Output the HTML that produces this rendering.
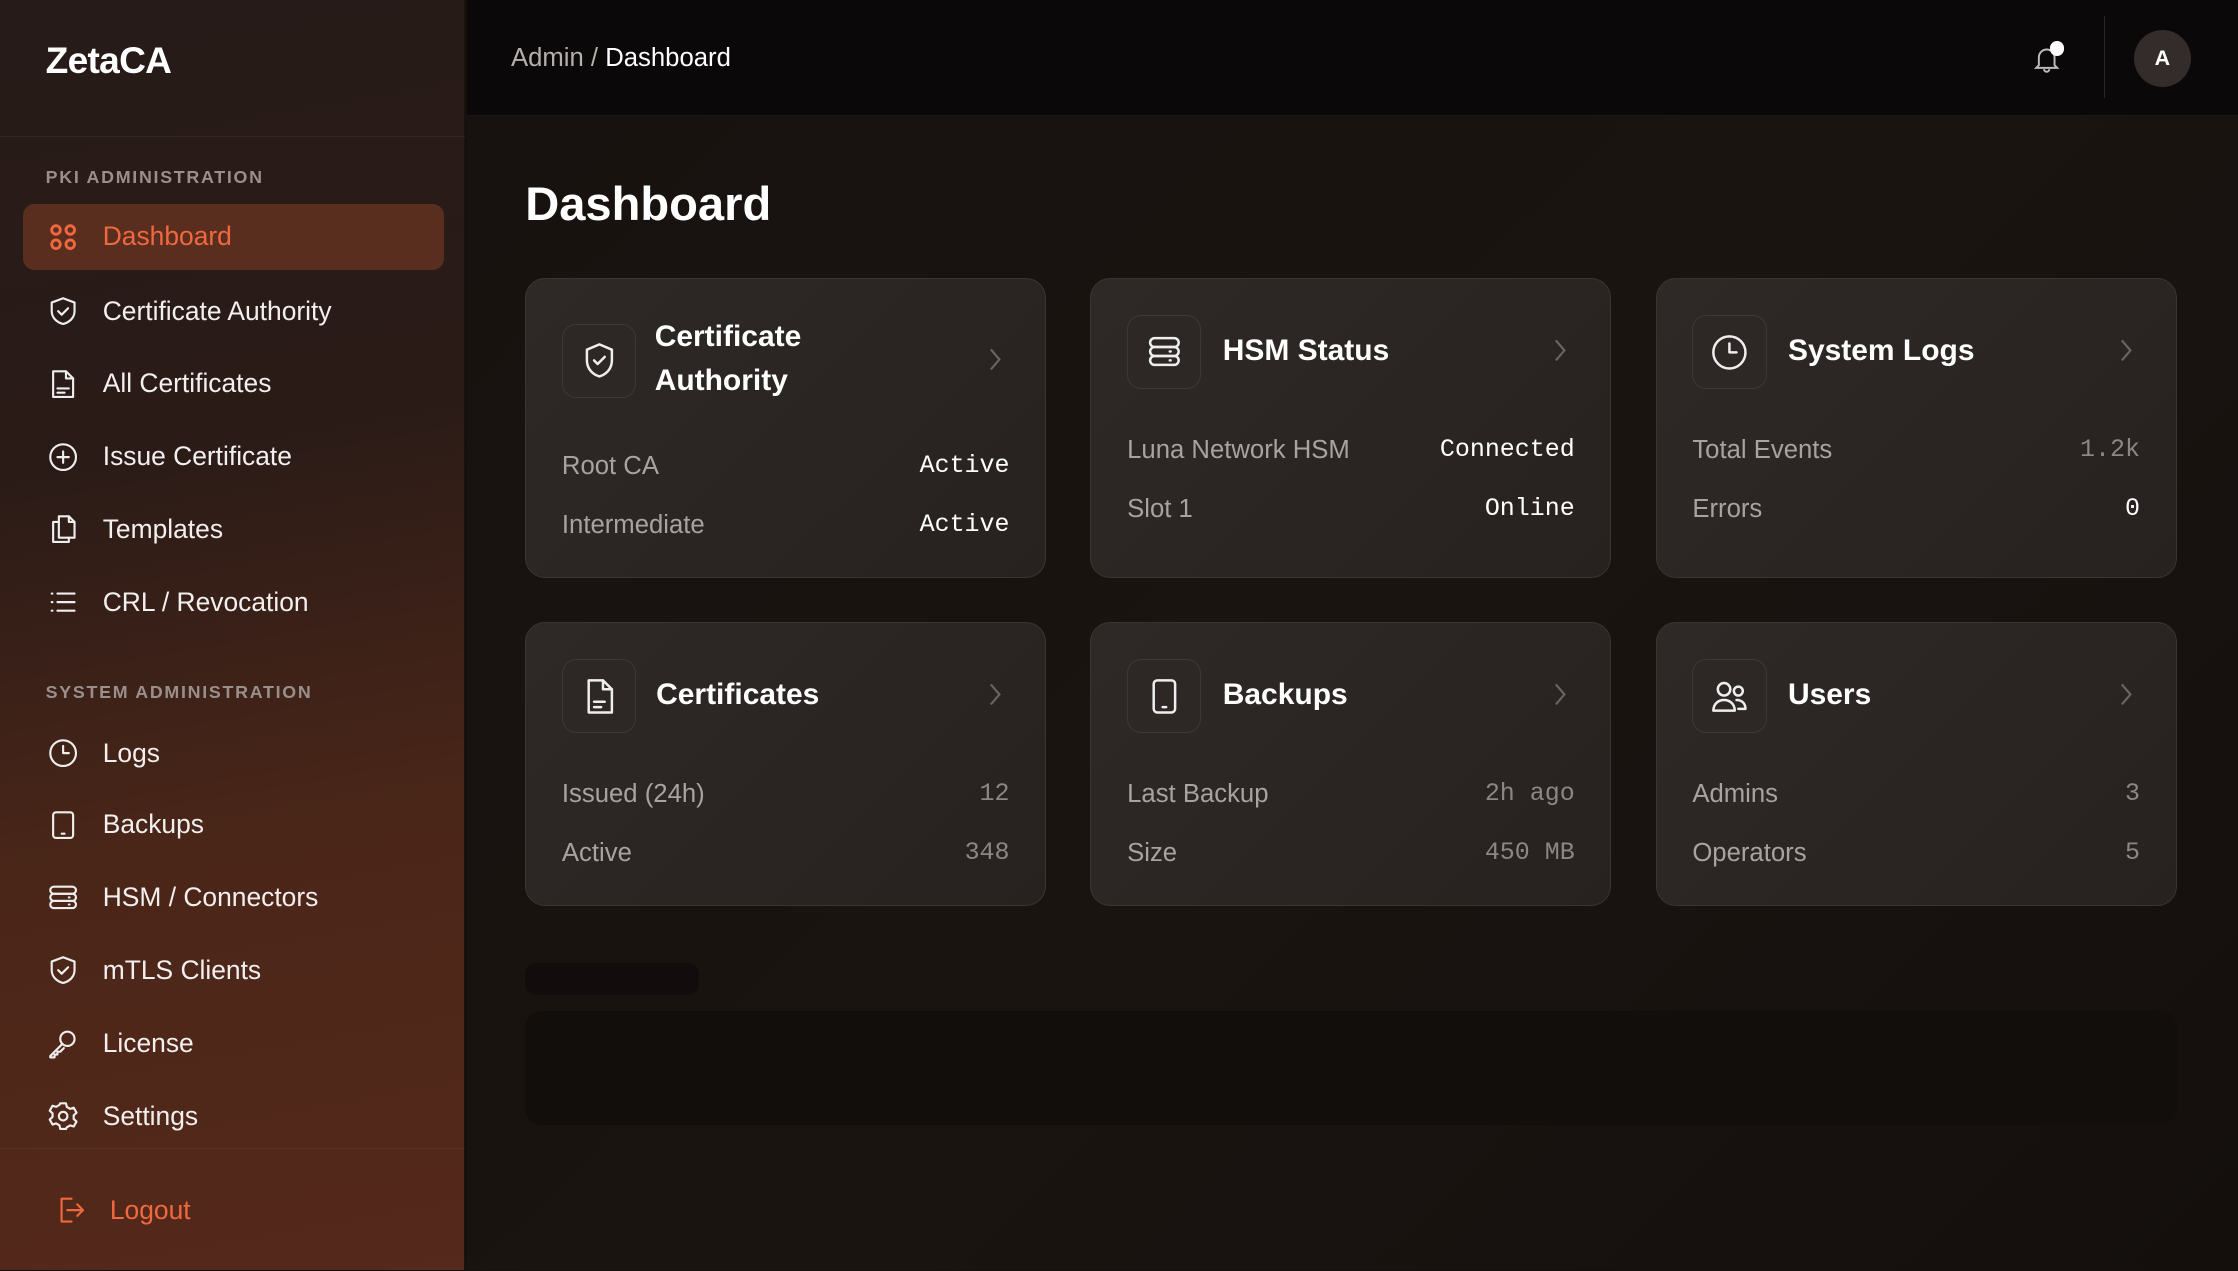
<!DOCTYPE html>
<html><head><meta charset="utf-8"><style>
*{box-sizing:border-box;margin:0;padding:0}
html,body{width:2238px;height:1271px;overflow:hidden;background:#15100e}
#w{zoom:1.42730;width:1568px;height:890px;position:relative;font-family:"Liberation Sans",sans-serif;color:#fff}
.side{position:absolute;left:0;top:0;width:326px;height:890px;background:linear-gradient(170deg,#261b18 0%,#2a1b17 35%,#4a2618 65%,#55291b 100%);border-right:1px solid #1a1210}
.logo{position:absolute;left:32px;top:27px;font-size:26px;font-weight:bold;letter-spacing:-0.5px}
.sep{position:absolute;left:0;width:326px;height:1px;background:rgba(255,255,255,0.06)}
.sec{position:absolute;left:32px;font-size:12.5px;font-weight:bold;letter-spacing:1.2px;color:#9a8f8c}
.item{position:absolute;left:16px;width:295px;height:46px;display:flex;align-items:center;padding-left:16px;font-size:18.5px;color:#f2efee}
.item svg{width:24px;height:24px;margin-right:16px;fill:none;stroke:#eee;stroke-width:1.5;stroke-linecap:round;stroke-linejoin:round}
.item.act{background:#5a2e1f;border-radius:8px;color:#f0683f}
.item.act svg{stroke:#f0683f;stroke-width:2}
.hdr{position:absolute;left:327px;top:0;right:0;height:81px;background:#0a0808;border-bottom:1px solid #1c1716}
.crumb{position:absolute;left:31px;top:31px;font-size:18px;color:#b5b0ae}
.crumb b{font-weight:normal;color:#fff}
.main{position:absolute;left:327px;top:81px;right:0;bottom:0;background:linear-gradient(135deg,#17110f,#1a1411 50%,#140f0d)}
h1{position:absolute;left:368px;top:123px;font-size:33px;font-weight:bold}
.card{position:absolute;width:365px;background:linear-gradient(135deg,#2e2826,#272220);border:1px solid #3a3432;border-radius:14px}
.ib{position:absolute;left:25px;width:52px;height:52px;border:1px solid #3e3835;background:#2d2725;border-radius:10px;display:flex;align-items:center;justify-content:center}
.ib svg{width:30px;height:30px;fill:none;stroke:#eee;stroke-width:1.4;stroke-linecap:round;stroke-linejoin:round}
.ct{position:absolute;left:90px;font-size:21px;font-weight:bold;line-height:31px}
.chev{position:absolute;right:30px;width:10px;height:16px}
.row{position:absolute;left:25px;right:25px;display:flex;justify-content:space-between;font-size:18px;color:#a8a2a0}
.row span:last-child{font-family:"Liberation Mono",monospace;font-size:17.5px}
.w{color:#fff}.g{color:#8c8684}
</style></head><body><div id="w">
<div class="side">
<div class="logo">ZetaCA</div>
<div class="sep" style="top:95px"></div>
<div class="sec" style="top:117px">PKI ADMINISTRATION</div>
<div class="item act" style="top:143px"><svg viewBox="0 0 24 24"><rect x="4" y="4" width="6" height="6" rx="3"/><rect x="14" y="4" width="6" height="6" rx="3"/><rect x="4" y="14" width="6" height="6" rx="3"/><rect x="14" y="14" width="6" height="6" rx="3"/></svg>Dashboard</div>
<div class="item" style="top:195px"><svg viewBox="0 0 24 24"><path d="M12 3l8 3v6c0 5-4 8-8 9-4-1-8-4-8-9V6z"/><path d="M8.5 12l2.5 2.5 4.5-4.5"/></svg>Certificate Authority</div>
<div class="item" style="top:246px"><svg viewBox="0 0 24 24"><path d="M5 3h9l5 5v13H5z"/><path d="M14 3v5h5M8 15h8M8 18h5"/></svg>All Certificates</div>
<div class="item" style="top:297px"><svg viewBox="0 0 24 24"><circle cx="12" cy="12" r="9"/><path d="M12 8v8M8 12h8"/></svg>Issue Certificate</div>
<div class="item" style="top:348px"><svg viewBox="0 0 24 24"><path d="M9 3h7l4 4v11H9z"/><path d="M16 3v4h4M9 7H5v14h11v-3"/></svg>Templates</div>
<div class="item" style="top:399px"><svg viewBox="0 0 24 24"><path d="M8 6h12M8 12h12M8 18h12M4 6h.5M4 12h.5M4 18h.5"/></svg>CRL / Revocation</div>
<div class="sec" style="top:478px">SYSTEM ADMINISTRATION</div>
<div class="item" style="top:505px"><svg viewBox="0 0 24 24"><circle cx="12" cy="12" r="9"/><path d="M12 7v5h4"/></svg>Logs</div>
<div class="item" style="top:555px"><svg viewBox="0 0 24 24"><rect x="5" y="3" width="14" height="18" rx="2"/><path d="M11 18h2"/></svg>Backups</div>
<div class="item" style="top:606px"><svg viewBox="0 0 24 24"><rect x="3" y="4" width="18" height="5" rx="2.5"/><rect x="3" y="9" width="18" height="5" rx="2.5"/><rect x="3" y="14" width="18" height="5" rx="2.5"/><path d="M16 11.5h.5M16 16.5h.5"/></svg>HSM / Connectors</div>
<div class="item" style="top:657px"><svg viewBox="0 0 24 24"><path d="M12 3l8 3v6c0 5-4 8-8 9-4-1-8-4-8-9V6z"/><path d="M8.5 12l2.5 2.5 4.5-4.5"/></svg>mTLS Clients</div>
<div class="item" style="top:708px"><svg viewBox="0 0 24 24"><circle cx="15" cy="9" r="5"/><path d="M11.5 12.5L3 21v1h3v-2h2v-2h2l2.5-2.5"/></svg>License</div>
<div class="item" style="top:759px"><svg viewBox="0 0 24 24"><circle cx="12" cy="12" r="3"/><path d="M10 3h4l.6 2.6 2.3 1.3 2.5-.8 2 3.5-2 1.8v2.6l2 1.8-2 3.5-2.5-.8-2.3 1.3L14 21h-4l-.6-2.6-2.3-1.3-2.5.8-2-3.5 2-1.8v-2.6l-2-1.8 2-3.5 2.5.8 2.3-1.3z"/></svg>Settings</div>
<div class="sep" style="top:804px"></div>
<div class="item" style="top:825px;left:21px;color:#f0683f"><svg viewBox="0 0 24 24" style="stroke:#f0683f"><path d="M13 4H6v16h7M10 12h11M17 8l4 4-4 4"/></svg>Logout</div>
</div>
<div class="hdr"><div class="crumb">Admin / <b>Dashboard</b></div>
<svg style="position:absolute;left:1096px;top:30px;width:22px;height:22px" viewBox="0 0 24 24" fill="none" stroke="#bbb" stroke-width="1.5"><path d="M6 17V11a6 6 0 0112 0v6l2 2H4z"/><path d="M10 20a2 2 0 004 0"/></svg>
<div style="position:absolute;left:1109px;top:29px;width:10px;height:10px;border-radius:50%;background:#fff"></div>
<div style="position:absolute;left:1147px;top:11px;width:1px;height:58px;background:#2a2422"></div>
<div style="position:absolute;left:1168px;top:21px;width:40px;height:40px;border-radius:50%;background:#332c2a;display:flex;align-items:center;justify-content:center;font-weight:bold;font-size:15px">A</div>
</div>
<div class="main">
<div style="position:absolute;left:41px;top:594px;width:122px;height:22px;border-radius:8px;background:#120d0c"></div>
<div style="position:absolute;left:41px;top:627px;width:1157px;height:80px;border-radius:12px;background:#120e0c"></div>
</div>
<h1>Dashboard</h1>

<div class="card" style="left:368px;top:195px;height:210px">
<div class="ib" style="top:31px"><svg viewBox="0 0 24 24"><path d="M12 3l7 3v6c0 5-3.5 8-7 9-3.5-1-7-4-7-9V6z"/><path d="M9 12l2 2 4-4"/></svg></div>
<div class="ct" style="top:25px">Certificate<br>Authority</div>
<svg class="chev" style="top:48px" viewBox="0 0 10 16" fill="none" stroke="#666" stroke-width="1.5"><path d="M2 1l6 7-6 7"/></svg>
<div class="row" style="top:121px"><span>Root CA</span><span class="w">Active</span></div>
<div class="row" style="top:162px"><span>Intermediate</span><span class="w">Active</span></div>
</div>
<div class="card" style="left:764px;top:195px;height:210px">
<div class="ib" style="top:25px"><svg viewBox="0 0 24 24"><rect x="4" y="4" width="16" height="5" rx="2.5"/><rect x="4" y="9" width="16" height="5" rx="2.5"/><rect x="4" y="14" width="16" height="5" rx="2.5"/><path d="M15 11.5h.5M15 16.5h.5"/></svg></div>
<div class="ct" style="top:35px;left:92px">HSM Status</div>
<svg class="chev" style="top:42px" viewBox="0 0 10 16" fill="none" stroke="#666" stroke-width="1.5"><path d="M2 1l6 7-6 7"/></svg>
<div class="row" style="top:110px"><span>Luna Network HSM</span><span class="w">Connected</span></div>
<div class="row" style="top:151px"><span>Slot 1</span><span class="w">Online</span></div>
</div>
<div class="card" style="left:1160px;top:195px;height:210px">
<div class="ib" style="top:25px"><svg viewBox="0 0 24 24"><circle cx="12" cy="12" r="9"/><path d="M12 7v5h4"/></svg></div>
<div class="ct" style="top:35px;left:92px">System Logs</div>
<svg class="chev" style="top:42px" viewBox="0 0 10 16" fill="none" stroke="#666" stroke-width="1.5"><path d="M2 1l6 7-6 7"/></svg>
<div class="row" style="top:110px"><span>Total Events</span><span class="g">1.2k</span></div>
<div class="row" style="top:151px"><span>Errors</span><span class="w">0</span></div>
</div>

<div class="card" style="left:368px;top:436px;height:199px">
<div class="ib" style="top:25px"><svg viewBox="0 0 24 24"><path d="M6 3h8l5 5v13H6z"/><path d="M14 3v5h5M9 15h6M9 18h4"/></svg></div>
<div class="ct" style="top:35px;left:91px">Certificates</div>
<svg class="chev" style="top:42px" viewBox="0 0 10 16" fill="none" stroke="#666" stroke-width="1.5"><path d="M2 1l6 7-6 7"/></svg>
<div class="row" style="top:110px"><span>Issued (24h)</span><span class="g">12</span></div>
<div class="row" style="top:151px"><span>Active</span><span class="g">348</span></div>
</div>
<div class="card" style="left:764px;top:436px;height:199px">
<div class="ib" style="top:25px"><svg viewBox="0 0 24 24"><rect x="6" y="3" width="12" height="18" rx="2"/><path d="M11 18h2"/></svg></div>
<div class="ct" style="top:35px;left:92px">Backups</div>
<svg class="chev" style="top:42px" viewBox="0 0 10 16" fill="none" stroke="#666" stroke-width="1.5"><path d="M2 1l6 7-6 7"/></svg>
<div class="row" style="top:110px"><span>Last Backup</span><span class="g">2h ago</span></div>
<div class="row" style="top:151px"><span>Size</span><span class="g">450 MB</span></div>
</div>
<div class="card" style="left:1160px;top:436px;height:199px">
<div class="ib" style="top:25px"><svg viewBox="0 0 24 24"><circle cx="9" cy="8" r="3.5"/><path d="M3 20c0-4 3-6 6-6s6 2 6 6z"/><circle cx="17" cy="9" r="2.5"/><path d="M16 14c3 0 5 2 5 5h-4"/></svg></div>
<div class="ct" style="top:35px;left:92px">Users</div>
<svg class="chev" style="top:42px" viewBox="0 0 10 16" fill="none" stroke="#666" stroke-width="1.5"><path d="M2 1l6 7-6 7"/></svg>
<div class="row" style="top:110px"><span>Admins</span><span class="g">3</span></div>
<div class="row" style="top:151px"><span>Operators</span><span class="g">5</span></div>
</div>
</div></body></html>
